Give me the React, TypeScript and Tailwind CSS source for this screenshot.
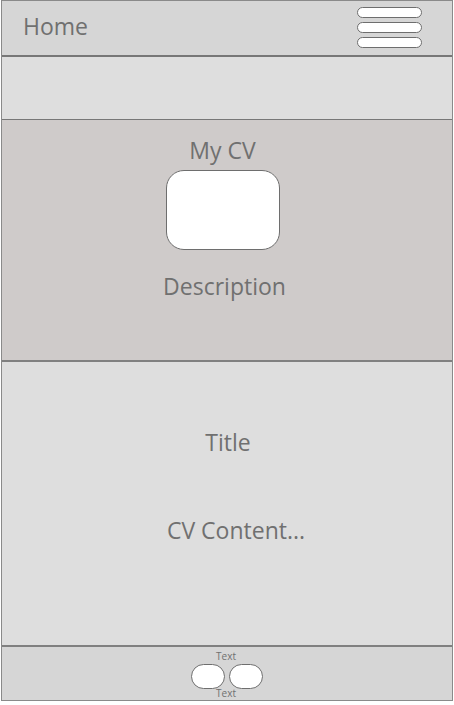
const font = { fontFamily: '"Open Sans", "Noto Sans", sans-serif' }

const Pill = ({ className }: { className: string }) => (
  <div className={`rounded-full border border-[#6e6e6e] bg-white ${className}`} />
)

export default function App() {
  return (
    <div className="bg-white w-[454px] h-[705px]" style={font}>
      <div className="ml-px w-[452px] h-[701px] border border-[#8a8a8a] flex flex-col text-[#707070]">
        <header className="h-[56px] shrink-0 bg-[#d6d6d6] border-b-2 border-[#777] flex items-center justify-between pl-[21px] pr-[30px]">
          <span className="text-[23px] leading-none -mt-[3px]">Home</span>
          <div className="flex flex-col gap-[4px] -mt-[1px]">
            <Pill className="w-[65px] h-[11px]" />
            <Pill className="w-[65px] h-[11px]" />
            <Pill className="w-[65px] h-[11px]" />
          </div>
        </header>
        <div className="h-[63px] shrink-0 bg-[#dedede] border-b border-[#777]" />
        <section className="h-[242px] shrink-0 bg-[#cfcbca] border-b-2 border-[#808080] flex flex-col items-center">
          <p className="text-[23px] leading-none mt-[19px] -ml-[9px]">My CV</p>
          <div className="mt-[8px] w-[114px] h-[80px] rounded-[18px] bg-white border border-[#6e6e6e] -ml-[8px]" />
          <p className="text-[23px] leading-none mt-[25px] -ml-[5px]">Description</p>
        </section>
        <section className="h-[285px] shrink-0 bg-[#dedede] border-b-2 border-[#808080] flex flex-col items-center">
          <p className="text-[23px] leading-none mt-[69px] ml-[2px]">Title</p>
          <p className="text-[23px] leading-none mt-[65px] ml-[18px]">CV Content...</p>
        </section>
        <footer className="flex-1 bg-[#d6d6d6] flex flex-col items-center">
          <span className="text-[10px] leading-none mt-[4px] -ml-[2px]">Text</span>
          <div className="flex gap-[4px] mt-[3px]">
            <Pill className="w-[34px] h-[25px]" />
            <Pill className="w-[34px] h-[25px]" />
          </div>
          <span className="text-[10px] leading-none -mt-[1px] -ml-[2px]">Text</span>
        </footer>
      </div>
    </div>
  )
}
